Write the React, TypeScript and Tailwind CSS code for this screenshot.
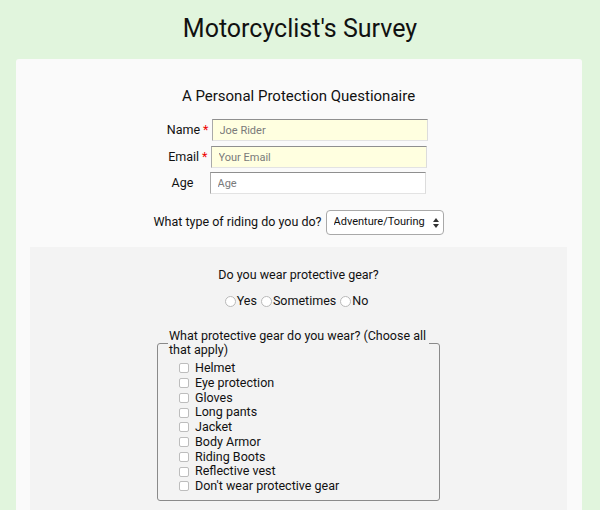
const gear = [
  'Helmet',
  'Eye protection',
  'Gloves',
  'Long pants',
  'Jacket',
  'Body Armor',
  'Riding Boots',
  'Reflective vest',
  "Don't wear protective gear",
];

const inputBase =
  'h-[22px] w-[216px] border border-t-[#8f8f8f] border-l-[#a9a9a9] border-r-[#dcdcdc] border-b-[#e3e3e3] pl-[7px] text-[11px] text-[#222] placeholder:text-[#7a7a7a] outline-none';

const App = () => {
  return (
    <div className="min-h-[510px] bg-[#e1f5dd] font-['Roboto',sans-serif] text-[#111] overflow-hidden">
      {/* Header */}
      <h1 className="pt-[10px] pb-[12px] text-center text-[25px] leading-[37px] font-normal">
        Motorcyclist's Survey
      </h1>

      {/* Survey card */}
      <div className="ml-4 mr-[18px] h-[460px] rounded-[3px] bg-[#fafafa] px-[14px] pr-[15px]">
        <h2 className="pt-[27px] text-center text-[15px] leading-[20px]">
          A Personal Protection Questionaire
        </h2>

        {/* Contact fields */}
        <div className="mx-auto mt-[13px] w-[260px] text-[12.5px]">
          <div className="flex items-center">
            <label className="flex w-[43px] justify-end pr-[3px]">
              Name<span className="ml-[3px] text-[#e00]">*</span>
            </label>
            <input className={inputBase + ' bg-[#ffffe0]'} placeholder="Joe Rider" />
          </div>
          <div className="mt-[5px] flex items-center">
            <label className="flex w-[42px] justify-end pr-[3px]">
              Email<span className="ml-[3px] text-[#e00]">*</span>
            </label>
            <input className={inputBase + ' bg-[#ffffe0]'} placeholder="Your Email" />
          </div>
          <div className="mt-[4px] flex items-center">
            <label className="w-[41px] pl-[3px]">Age</label>
            <input className={inputBase + ' bg-white'} placeholder="Age" />
          </div>
        </div>

        {/* Riding type */}
        <div className="mt-[16px] flex items-center justify-center gap-[4px] text-[12.5px]">
          <span>What type of riding do you do?</span>
          <div className="relative">
            <select className="h-[25px] w-[118px] appearance-none rounded-[4px] border border-[#a9a9a9] bg-white pl-[7px] text-[11px] text-[#111] outline-none">
              <option>Adventure/Touring</option>
              <option>Sport</option>
              <option>Cruiser</option>
              <option>Commuter</option>
            </select>
            <svg
              className="pointer-events-none absolute right-[5px] top-[8px]"
              width="6"
              height="10"
              viewBox="0 0 6 10"
            >
              <path d="M3 0 L6 4 L0 4 Z M0 6 L6 6 L3 10 Z" fill="#333" />
            </svg>
          </div>
        </div>

        {/* Protective gear section */}
        <div className="mt-[12px] h-[300px] bg-[#f3f3f3] pt-[20px] text-[12.5px]">
          <p className="text-center leading-[16px]">Do you wear protective gear?</p>

          <div className="mt-[10px] flex items-center justify-center leading-[16px]">
            {['Yes', 'Sometimes', 'No'].map((opt) => (
              <label key={opt} className="mr-[4px] flex items-center">
                <input
                  type="radio"
                  name="wears"
                  className="mr-[1px] h-[11px] w-[11px] appearance-none rounded-full border border-[#b9b9b9] bg-white"
                />
                {opt}
              </label>
            ))}
          </div>

          <fieldset className="mx-auto mt-[20px] w-[283px] rounded-[3px] border border-[#8a8a8a] px-[10px] pb-[6px]">
            <legend className="px-[1px] leading-[14px]">
              What protective gear do you wear? (Choose all that apply)
            </legend>
            <ul className="pl-[11px] pt-[4px]">
              {gear.map((item) => (
                <li key={item} className="flex h-[14.75px] items-center">
                  <input
                    type="checkbox"
                    className="mr-[6px] h-[10px] w-[10px] appearance-none rounded-[2px] border border-[#bdbdbd] bg-white"
                  />
                  <span>{item}</span>
                </li>
              ))}
            </ul>
          </fieldset>
        </div>
      </div>
    </div>
  );
};

export default App;
